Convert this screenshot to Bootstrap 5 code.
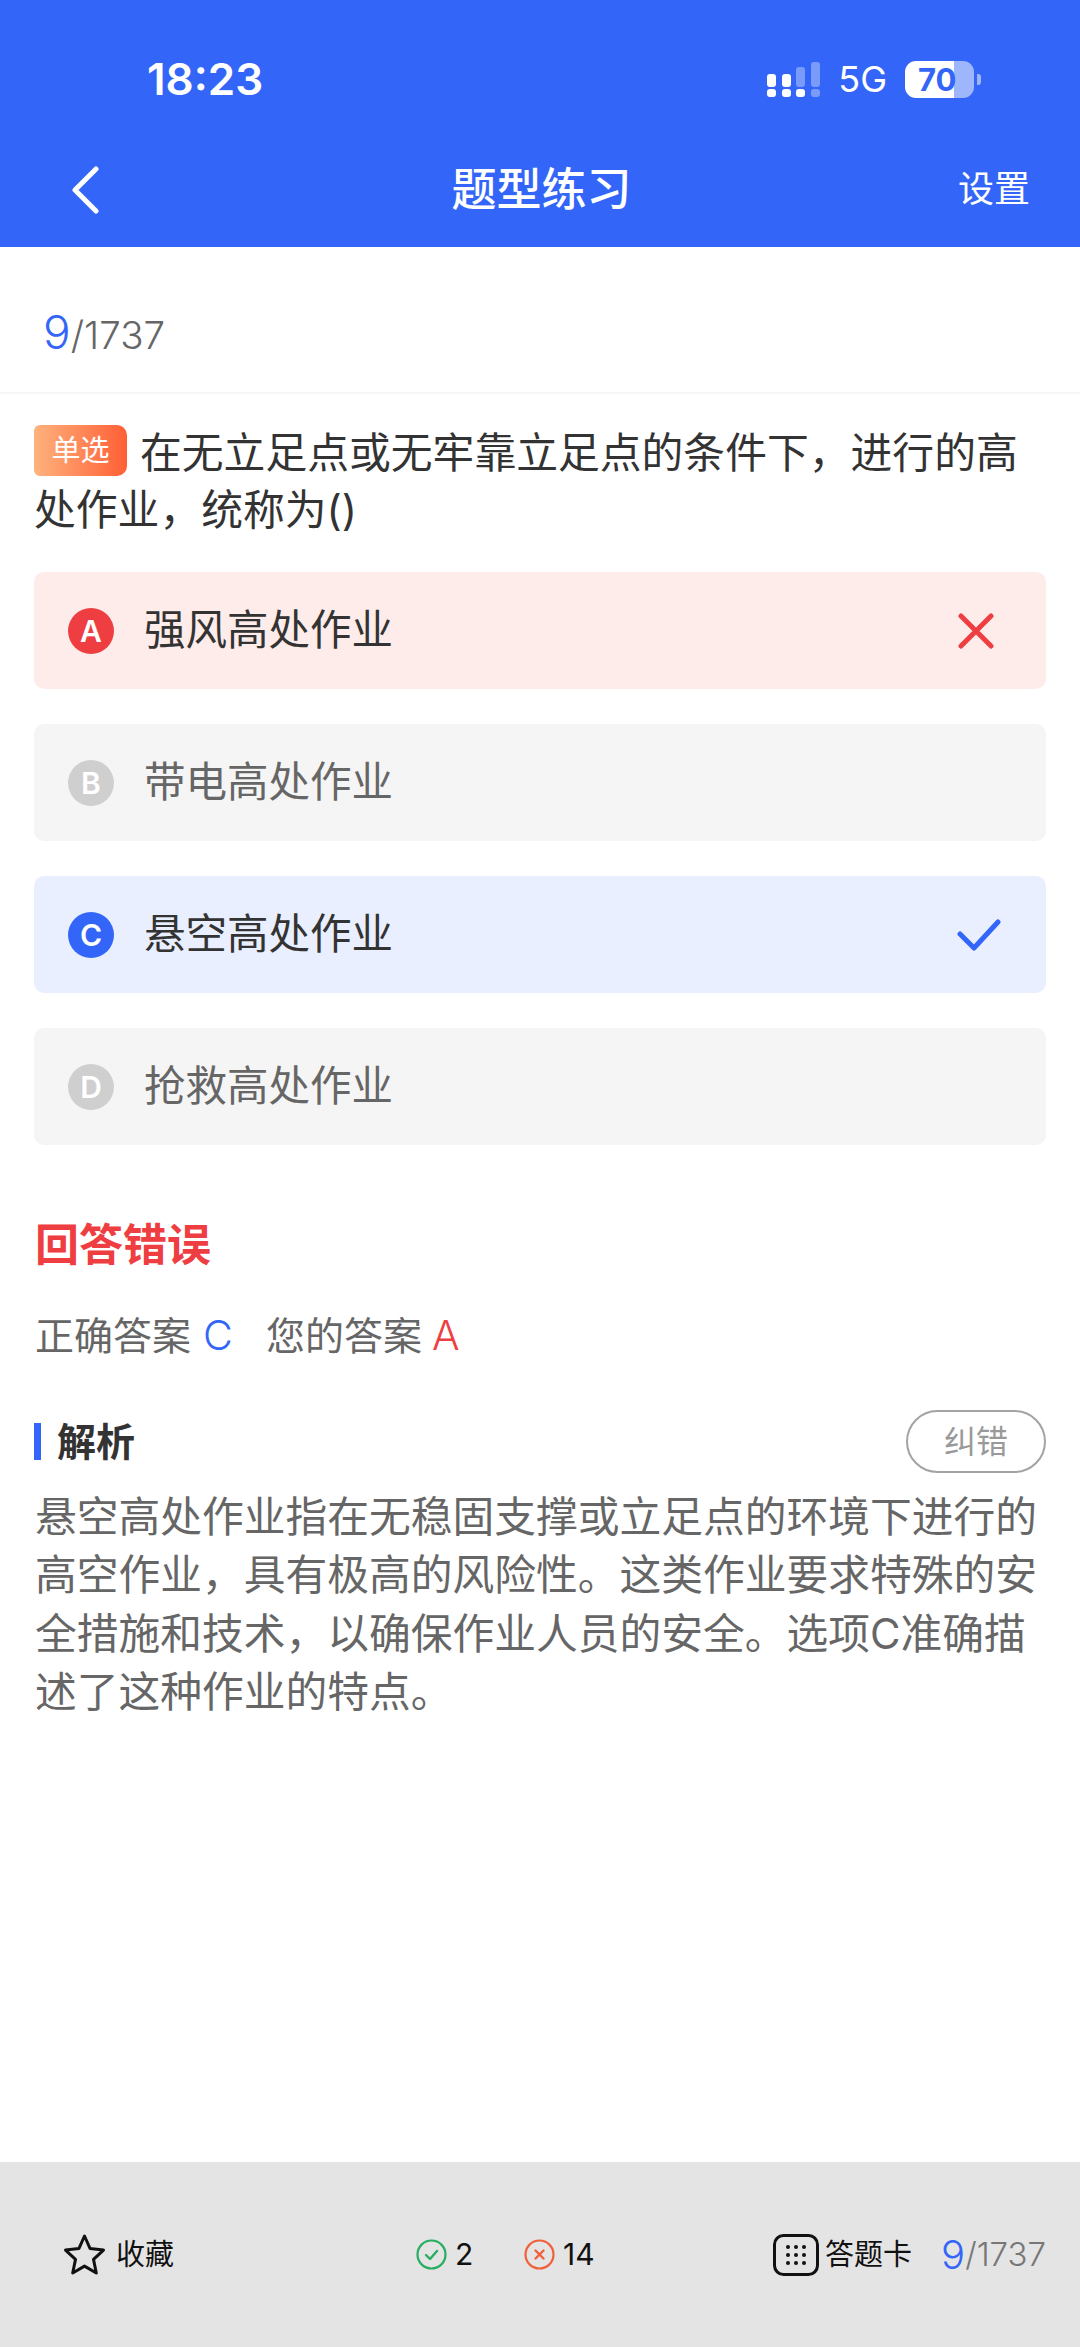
<!DOCTYPE html>
<html lang="zh-CN">
<head>
  <meta charset="UTF-8">
  <meta name="viewport" content="width=device-width, initial-scale=1">
  <link href="https://cdn.jsdelivr.net/npm/bootstrap@5.3.2/dist/css/bootstrap.min.css" rel="stylesheet">
  <script src="https://cdn.jsdelivr.net/npm/bootstrap@5.3.2/dist/js/bootstrap.bundle.min.js"></script>
  <title>题型练习</title>
  <style>
    html, body { height: 100%; }
    body { font-family: Inter, "Noto Sans CJK SC", sans-serif; color: #333; background: #fff; }
    .page-wrap { height: 2347px; }
    .top-blue { background: #3366f8; color: #fff; height: 247px; }
    .status-row { height: 158px; padding: 0 99px 0 147px; }
    .clock { font-size: 44px; font-weight: 600; line-height: 1; }
    .net-text { font-size: 36px; line-height: 1; margin: 0 18px 0 18px; }
    .batt-wrap { width: 69px; height: 37px; border-radius: 11px; background: linear-gradient(90deg, #fff 71%, #9db6fc 71%); color: #3366f8; font-size: 31px; font-weight: 700; line-height: 37px; padding-left: 13px; }
    .batt-nub { width: 4px; height: 11px; background: #9db6fc; border-radius: 0 3px 3px 0; margin-left: 3px; }
    .title-row { height: 89px; padding: 0 50px 0 70px; margin-top: -13px; }
    .back-box { width: 93px; }
    .set-box { width: 110px; }
    .page-title { font-size: 45px; font-weight: 500; line-height: 1; }
    .set-link { font-size: 36px; line-height: 1; }
    .count-row { height: 147px; padding: 24px 0 0 43px; border-bottom: 2px solid #f6f6f6; }
    .num-now { font-size: 46px; color: #3366f8; font-weight: 300; line-height: 1; }
    .num-all { font-size: 38.5px; color: #666; font-weight: 300; line-height: 1; }
    .quest { padding: 31px 34px 0 34px; font-size: 41.8px; line-height: 57px; color: #333; }
    .tag-one { display: inline-block; width: 93px; height: 51px; line-height: 51px; vertical-align: top; margin-right: 13px; border-radius: 6px 10px 10px 6px; background: linear-gradient(90deg, #ffb27d, #ff5f35); color: #fff; font-size: 29px; text-align: center; }
    .opt-list { padding: 0 34px; margin-top: 33px; gap: 35px; }
    .opt-item { height: 117px; border-radius: 10px; background: #f5f5f5; color: #666; font-size: 41.5px; padding: 0 34px; }
    .opt-item.is-wrong { background: #feecea; color: #333; }
    .opt-item.is-right { background: #e9effe; color: #333; }
    .opt-mark { width: 46px; height: 46px; border-radius: 50%; background: #cfcfcf; color: #fff; font-size: 30px; font-weight: 600; line-height: 46px; text-align: center; flex: none; }
    .opt-name { margin-left: 30px; line-height: 1; }
    .is-wrong .opt-mark { background: #ee3e42; }
    .is-right .opt-mark { background: #3366f8; }
    .mark-x { margin-right: 18px; }
    .mark-ok { margin-right: 11px; }
    .res-title { margin: 76px 0 0 35px; font-size: 44px; font-weight: 700; line-height: 48px; color: #ee3e42; }
    .res-line { margin: 42px 0 0 35px; font-size: 39px; line-height: 48px; color: #666; }
    .ans-blue { color: #3366f8; font-weight: 300; font-size: 41px; margin: 0 33px 0 12px; }
    .ans-red { color: #ee3e42; font-weight: 300; font-size: 41px; margin-left: 10px; }
    .ana-head { margin-top: 50px; padding: 0 34px; height: 63px; }
    .ana-bar { width: 7px; height: 37px; background: #3366f8; margin-right: 16px; }
    .ana-title { font-size: 39px; font-weight: 700; line-height: 1; color: #333; }
    .fix-btn { width: 140px; height: 63px; border: 2px solid #a3a3a3; border-radius: 32px; color: #999; font-size: 32px; line-height: 1; }
    .ana-text { margin: 15px 34px 0 35px; font-size: 41.75px; line-height: 58.4px; color: #666; }
    .foot-bar { height: 185px; background: #e4e4e4; color: #111; font-size: 29px; padding: 0 34px 0 63px; }
    .foot-bar svg { flex: none; }
    .foot-fav { width: 353px; }
    .foot-good { width: 108px; }
    .foot-bad { width: 249px; }
    .foot-name { margin-left: 10px; }
    .foot-num { font-size: 30px; }
    .foot-card { margin-left: 6px; }
    .foot-now { font-size: 40px; color: #3366f8; font-weight: 300; line-height: 1; }
    .foot-all { font-size: 33px; color: #777; font-weight: 300; line-height: 1; }
  </style>
</head>
<body>
<div class="page-wrap d-flex flex-column">

  <div class="top-blue">
    <div class="status-row d-flex align-items-center justify-content-between">
      <span class="clock">18:23</span>
      <div class="d-flex align-items-center">
        <svg width="54" height="36" viewBox="0 0 54 36">
          <g fill="#fff">
            <rect x="1" y="13" width="9" height="13" rx="3"/>
            <rect x="16" y="13" width="9" height="13" rx="3"/>
            <rect x="1" y="28" width="9" height="8" rx="3"/>
            <rect x="16" y="28" width="9" height="8" rx="3"/>
            <rect x="30" y="28" width="9" height="8" rx="3"/>
          </g>
          <g fill="#fff" opacity=".35">
            <rect x="30" y="6" width="9" height="20" rx="3"/>
            <rect x="45" y="1" width="9" height="25" rx="3"/>
            <rect x="45" y="28" width="9" height="8" rx="3"/>
          </g>
        </svg>
        <span class="net-text">5G</span>
        <span class="batt-wrap">70</span>
        <span class="batt-nub"></span>
      </div>
    </div>
    <div class="title-row d-flex align-items-center justify-content-between">
      <div class="back-box d-flex">
        <svg width="30" height="48" viewBox="0 0 30 48"><path d="M26 3 5 24l21 21" fill="none" stroke="#fff" stroke-width="5" stroke-linecap="round" stroke-linejoin="round"/></svg>
      </div>
      <span class="page-title">题型练习</span>
      <div class="set-box text-end"><span class="set-link">设置</span></div>
    </div>
  </div>

  <div class="count-row d-flex align-items-center">
    <div><span class="num-now">9</span><span class="num-all">/1737</span></div>
  </div>

  <div class="quest"><span class="tag-one">单选</span>在无立足点或无牢靠立足点的条件下，进行的高<br>处作业，统称为()</div>

  <div class="opt-list d-flex flex-column">
    <div class="opt-item is-wrong d-flex align-items-center">
      <span class="opt-mark">A</span><span class="opt-name flex-grow-1">强风高处作业</span>
      <svg class="mark-x" width="36" height="36" viewBox="0 0 36 36"><path d="M3 3l30 30M33 3 3 33" fill="none" stroke="#ee3e42" stroke-width="5" stroke-linecap="round"/></svg>
    </div>
    <div class="opt-item d-flex align-items-center">
      <span class="opt-mark">B</span><span class="opt-name">带电高处作业</span>
    </div>
    <div class="opt-item is-right d-flex align-items-center">
      <span class="opt-mark">C</span><span class="opt-name flex-grow-1">悬空高处作业</span>
      <svg class="mark-ok" width="44" height="34" viewBox="0 0 44 34"><path d="M3 16l14 14L41 4" fill="none" stroke="#3366f8" stroke-width="5" stroke-linecap="round" stroke-linejoin="round"/></svg>
    </div>
    <div class="opt-item d-flex align-items-center">
      <span class="opt-mark">D</span><span class="opt-name">抢救高处作业</span>
    </div>
  </div>

  <div class="res-title">回答错误</div>
  <div class="res-line">正确答案<span class="ans-blue">C</span>您的答案<span class="ans-red">A</span></div>

  <div class="ana-head d-flex align-items-center">
    <span class="ana-bar"></span>
    <span class="ana-title flex-grow-1">解析</span>
    <span class="fix-btn d-flex align-items-center justify-content-center">纠错</span>
  </div>
  <div class="ana-text">悬空高处作业指在无稳固支撑或立足点的环境下进行的高空作业，具有极高的风险性。这类作业要求特殊的安全措施和技术，以确保作业人员的安全。选项C准确描述了这种作业的特点。</div>

  <div class="foot-bar mt-auto d-flex align-items-center">
    <div class="foot-fav d-flex align-items-center">
      <svg width="43" height="43" viewBox="0 0 43 43"><path d="M21.5 3l5.6 12.6 13.4 1.5-10 9.3 2.8 13.6-11.8-6.9-11.8 6.9 2.8-13.6-10-9.3 13.4-1.5z" fill="none" stroke="#111" stroke-width="3" stroke-linejoin="round"/></svg>
      <span class="foot-name">收藏</span>
    </div>
    <div class="foot-good d-flex align-items-center">
      <svg width="31" height="31" viewBox="0 0 31 31"><circle cx="15.5" cy="15.5" r="14" fill="none" stroke="#27ae60" stroke-width="2.2"/><path d="M10 16l4 4 7-8" fill="none" stroke="#27ae60" stroke-width="2.4" stroke-linecap="round" stroke-linejoin="round"/></svg>
      <span class="foot-num ms-2">2</span>
    </div>
    <div class="foot-bad d-flex align-items-center">
      <svg width="31" height="31" viewBox="0 0 31 31"><circle cx="15.5" cy="15.5" r="14" fill="none" stroke="#f1603a" stroke-width="2.2"/><path d="M11.5 11.5l8 8M19.5 11.5l-8 8" fill="none" stroke="#f1603a" stroke-width="2.4" stroke-linecap="round"/></svg>
      <span class="foot-num ms-2">14</span>
    </div>
    <svg width="46" height="42" viewBox="0 0 46 42">
      <rect x="1.5" y="1.5" width="43" height="39" rx="9" fill="none" stroke="#111" stroke-width="3"/>
      <g fill="#111">
        <circle cx="15" cy="13" r="2"/><circle cx="23" cy="13" r="2"/><circle cx="31" cy="13" r="2"/>
        <circle cx="15" cy="21" r="2"/><circle cx="23" cy="21" r="2"/><circle cx="31" cy="21" r="2"/>
        <circle cx="15" cy="29" r="2"/><circle cx="23" cy="29" r="2"/><circle cx="31" cy="29" r="2"/>
      </g>
    </svg>
    <span class="foot-card">答题卡</span>
    <span class="foot-now ms-auto">9</span><span class="foot-all">/1737</span>
  </div>
</div>
</body>
</html>
